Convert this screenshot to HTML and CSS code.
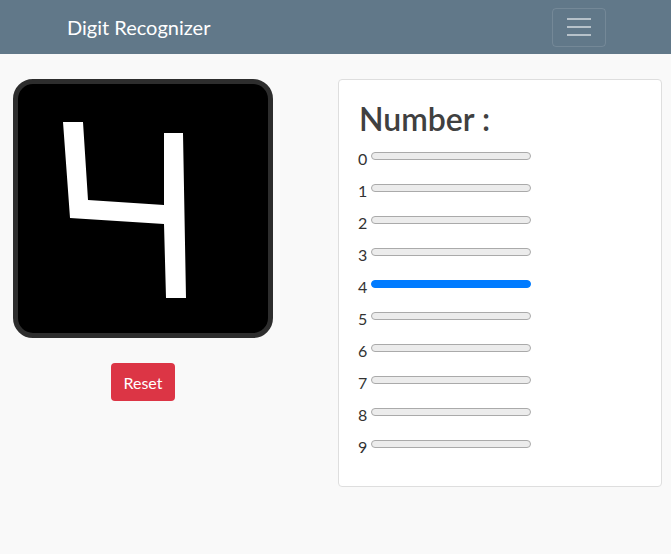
FILE: index.html
```html
<!DOCTYPE html>
<html lang="en">
<head>
<meta charset="utf-8">
<title>Digit Recognizer</title>
<link rel="stylesheet" href="styles.css">
</head>
<body>
<header class="navbar">
  <span class="brand">Digit Recognizer</span>
  <button class="toggler" aria-label="Toggle navigation">
    <span class="bar-line"></span>
    <span class="bar-line"></span>
    <span class="bar-line"></span>
  </button>
</header>
<main class="page">
  <section class="draw-col">
    <div class="canvas">
      <svg width="250" height="250" viewBox="0 0 250 250">
        <polygon fill="#fff" points="45,38 65,38 70,116 146,121 146,49 165,49 168,214 148,214 146,140 52,134"/>
      </svg>
    </div>
    <button class="btn-reset">Reset</button>
  </section>
  <section class="card">
    <h2 class="title">Number :</h2>
    <div class="result"><span class="digit">0</span><span class="meter"></span></div>
    <div class="result"><span class="digit">1</span><span class="meter"></span></div>
    <div class="result"><span class="digit">2</span><span class="meter"></span></div>
    <div class="result"><span class="digit">3</span><span class="meter"></span></div>
    <div class="result"><span class="digit">4</span><span class="meter active"></span></div>
    <div class="result"><span class="digit">5</span><span class="meter"></span></div>
    <div class="result"><span class="digit">6</span><span class="meter"></span></div>
    <div class="result"><span class="digit">7</span><span class="meter"></span></div>
    <div class="result"><span class="digit">8</span><span class="meter"></span></div>
    <div class="result"><span class="digit">9</span><span class="meter"></span></div>
  </section>
</main>
</body>
</html>
```
FILE: styles.css
```css
* { box-sizing: border-box; }
body {
  margin: 0;
  background: #f9f9f9;
  font-family: Lato, "Open Sans", sans-serif;
  color: #333;
}
.navbar {
  height: 54px;
  background: #617889;
  display: flex;
  align-items: center;
  justify-content: space-between;
  padding: 0 65px 0 67px;
}
.brand {
  color: #fff;
  font-size: 20px;
  line-height: 1;
}
.toggler {
  width: 54px;
  height: 39px;
  background: transparent;
  border: 1px solid rgba(255,255,255,0.12);
  border-radius: 4px;
  display: flex;
  flex-direction: column;
  align-items: center;
  justify-content: center;
  gap: 6px;
  padding: 0;
}
.bar-line {
  display: block;
  width: 24px;
  height: 2px;
  background: rgba(255,255,255,0.55);
}
.page {
  display: flex;
  align-items: flex-start;
  padding-top: 25px;
}
.draw-col {
  margin-left: 13px;
  width: 260px;
  display: flex;
  flex-direction: column;
  align-items: center;
}
.canvas {
  width: 260px;
  height: 259px;
  border: 5px solid #2d2d2d;
  border-radius: 20px;
  background: #000;
  overflow: hidden;
}
.canvas svg { display: block; }
.btn-reset {
  margin-top: 25px;
  width: 64px;
  height: 38px;
  border: none;
  border-radius: 4px;
  background: #dc3545;
  color: #fff;
  font-family: inherit;
  font-size: 16px;
  padding: 0;
}
.card {
  margin-left: 65px;
  width: 324px;
  height: 408px;
  background: #fff;
  border: 1px solid #dedede;
  border-radius: 4px;
  padding: 20px 20px 20px 19px;
}
.title {
  margin: 0 0 14px 1px;
  font-size: 32px;
  line-height: 38px;
  font-weight: 600;
  color: #404040;
}
.result {
  display: flex;
  align-items: flex-start;
  height: 32px;
}
.digit {
  width: 13px;
  font-size: 16px;
  line-height: 16px;
  margin-top: -1px;
  color: #333;
}
.meter {
  width: 160px;
  height: 8px;
  border: 1px solid #aaa;
  background: #ececec;
  border-radius: 4px;
}
.meter.active {
  background: #007bff;
  border-color: #007bff;
}
```
